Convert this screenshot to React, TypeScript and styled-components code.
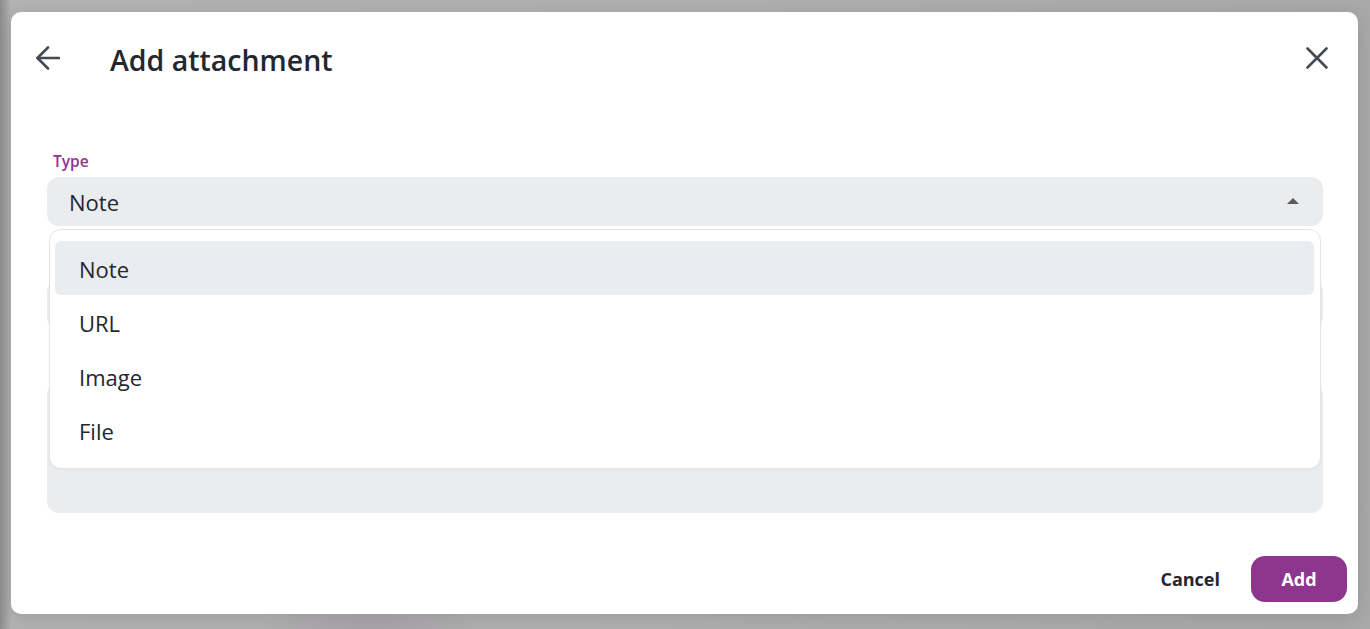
import React from "react";
import styled, { createGlobalStyle } from "styled-components";

const Global = createGlobalStyle`
  html, body { margin: 0; padding: 0; }
  body {
    font-family: "Open Sans", "Noto Sans", "Liberation Sans", sans-serif;
    color: #23272e;
    overflow: hidden;
  }
  * { box-sizing: border-box; }
`;

const Backdrop = styled.div`
  width: 1370px;
  height: 629px;
  padding: 12px 12px 15px 11px;
  background:
    radial-gradient(ellipse 110px 30px at 370px 629px, rgba(150, 135, 150, 0.35), transparent),
    linear-gradient(90deg, #8c8c8c 0px, #b3b3b3 11px, #b0b0b0 50%, #a9a9a9 100%);
`;

const Dialog = styled.div`
  width: 1347px;
  height: 602px;
  background: #ffffff;
  border-radius: 10px;
  display: flex;
  flex-direction: column;
  box-shadow: 0 4px 20px rgba(0, 0, 0, 0.12);
`;

const Header = styled.div`
  height: 92px;
  display: flex;
  align-items: center;
  padding: 0 29px 0 25px;
`;

const IconButton = styled.button`
  border: none;
  background: transparent;
  padding: 0;
  width: 24px;
  height: 24px;
  display: flex;
  align-items: center;
  justify-content: center;
  color: #454a52;
  cursor: pointer;
`;

const Title = styled.h2`
  margin: 3px 0 0 50px;
  flex: 1;
  font-size: 28.5px;
  font-weight: 600;
  color: #23272e;
`;

const Body = styled.div`
  flex: 1;
  padding: 47px 35px 0 36px;
  display: flex;
  flex-direction: column;
  gap: 28px;
`;

const Group = styled.div`
  position: relative;
  display: flex;
  flex-direction: column;
  gap: 6px;
`;

const Label = styled.label<{ $active?: boolean }>`
  height: 20px;
  line-height: 20px;
  padding-left: 6px;
  font-size: 15.5px;
  font-weight: 600;
  color: ${(p) => (p.$active ? "#8e358e" : "#5a5f66")};
`;

const Field = styled.div<{ $h: number }>`
  height: ${(p) => p.$h}px;
  background: #ebecee;
  border-radius: 12px;
  display: flex;
  align-items: center;
  padding: 0 24px 0 22px;
  font-size: 22px;
  color: #23272e;
`;

const SelectValue = styled.span`
  flex: 1;
  padding-top: 1px;
`;

const Caret = styled.span`
  width: 0;
  height: 0;
  border-left: 6px solid transparent;
  border-right: 6px solid transparent;
  border-bottom: 6px solid #5c5c5c;
  margin-top: -2px;
`;

const Menu = styled.ul`
  position: absolute;
  top: 78px;
  left: 2px;
  right: 2px;
  margin: 0;
  list-style: none;
  padding: 11px 6px 11px 5px;
  background: #ffffff;
  border: 1px solid #e2e4e8;
  border-radius: 12px;
  box-shadow: 0 1px 3px rgba(0, 0, 0, 0.03);
  z-index: 5;
`;

const Item = styled.li<{ $selected?: boolean }>`
  height: 54px;
  display: flex;
  align-items: center;
  padding: 2px 0 0 24px;
  border-radius: 6px;
  font-size: 22px;
  color: #23272e;
  background: ${(p) => (p.$selected ? "#e9ecf0" : "transparent")};
`;

const Footer = styled.div`
  display: flex;
  justify-content: flex-end;
  align-items: center;
  padding: 0 11px 12px 0;
  gap: 15px;
`;

const TextButton = styled.button`
  border: none;
  background: transparent;
  font-family: inherit;
  font-size: 18px;
  font-weight: 700;
  color: #23272e;
  padding: 0 16px;
  height: 46px;
`;

const PrimaryButton = styled.button`
  border: none;
  background: #8e358e;
  color: #ffffff;
  font-family: inherit;
  font-size: 18px;
  font-weight: 700;
  width: 96px;
  height: 46px;
  border-radius: 14px;
`;

const BackIcon = () => (
  <svg width="24" height="24" viewBox="0 0 24 24" fill="none" stroke="currentColor" strokeWidth="2.6" strokeLinecap="round" strokeLinejoin="round">
    <path d="M23 12H1.5" />
    <path d="M12 1.5L1.5 12L12 22.5" />
  </svg>
);

const CloseIcon = () => (
  <svg width="24" height="24" viewBox="0 0 24 24" fill="none" stroke="currentColor" strokeWidth="2.6" strokeLinecap="round">
    <path d="M2.5 2.5L21.5 21.5" />
    <path d="M21.5 2.5L2.5 21.5" />
  </svg>
);

const options = ["Note", "URL", "Image", "File"];

export default function App() {
  return (
    <>
      <Global />
      <Backdrop>
        <Dialog>
          <Header>
            <IconButton aria-label="Back">
              <BackIcon />
            </IconButton>
            <Title>Add attachment</Title>
            <IconButton aria-label="Close">
              <CloseIcon />
            </IconButton>
          </Header>
          <Body>
            <Group>
              <Label $active>Type</Label>
              <Field $h={49}>
                <SelectValue>Note</SelectValue>
                <Caret />
              </Field>
              <Menu>
                {options.map((o, i) => (
                  <Item key={o} $selected={i === 0}>
                    {o}
                  </Item>
                ))}
              </Menu>
            </Group>
            <Group>
              <Label aria-label="Title" />
              <Field $h={49} />
            </Group>
            <Group>
              <Label aria-label="Content" />
              <Field $h={130} />
            </Group>
          </Body>
          <Footer>
            <TextButton>Cancel</TextButton>
            <PrimaryButton>Add</PrimaryButton>
          </Footer>
        </Dialog>
      </Backdrop>
    </>
  );
}
